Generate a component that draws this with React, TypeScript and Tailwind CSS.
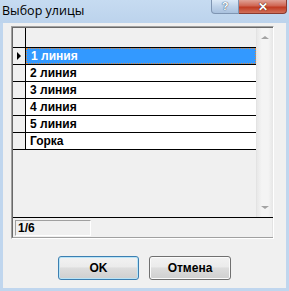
import { ReactNode } from 'react';

const rows = ['1 линия', '2 линия', '3 линия', '4 линия', '5 линия', 'Горка'];

function WinButton({ children, focused = false, className = '' }: { children: ReactNode; focused?: boolean; className?: string }) {
  return (
    <button
      className={`h-[24px] rounded-[3px] border text-[12px] font-bold text-black bg-[linear-gradient(#f2f2f2_0%,#ebebeb_45%,#dddddd_50%,#cfcfcf_100%)] ${
        focused ? 'border-[#3c7fb1] shadow-[inset_0_0_0_1px_#b9e4f7]' : 'border-[#707070] shadow-[inset_0_0_0_1px_#fbfbfb]'
      } ${className}`}
    >
      {children}
    </button>
  );
}

export default function App() {
  return (
    <div className="w-[289px] h-[291px] flex flex-col bg-[#c0d6ee] font-['Liberation_Sans',Arial,sans-serif] overflow-hidden">
      {/* Title bar */}
      <div className="h-[23px] flex items-start justify-between bg-[linear-gradient(#c6dbf1,#bcd3ec)]">
        <span className="pl-[2px] pt-[4px] text-[12.5px] leading-[14px] text-black font-['Open_Sans',sans-serif]">Выбор улицы</span>
        <div className="flex mr-[2px]">
          <div className="w-[28px] h-[14px] flex items-center justify-center rounded-bl-[4px] border border-t-0 border-[#7f95b2] bg-[linear-gradient(#dce9f7,#bed2e9_50%,#a9c1de)] text-[11px] font-bold leading-none text-white [text-shadow:0_0_1px_#35506f,0_0_1px_#35506f]">
            ?
          </div>
          <div className="w-[48px] h-[14px] flex items-center justify-center rounded-br-[4px] border border-t-0 border-l-0 border-[#8a3a2f] bg-[linear-gradient(#e0a296,#cf6552_45%,#c03b22_55%,#d0705a)] text-[12px] font-bold leading-none text-white [text-shadow:0_0_1px_#4d1a12,0_0_1px_#4d1a12]">
            ✕
          </div>
        </div>
      </div>

      {/* Client area */}
      <div className="flex-1 mx-[3px] mb-[3px] bg-[#f0f0f0] flex flex-col">
        {/* Grid panel */}
        <div className="mt-[3px] ml-[8px] w-[263px] h-[213px] border border-t-[#a0a0a0] border-l-[#a0a0a0] border-r-white border-b-white">
          <div className="h-full flex flex-col border-l border-t border-b border-[#696969] border-b-[#a0a0a0]">
            <div className="h-[190px] flex border-b border-black">
              <div className="flex-1 flex flex-col">
                <div className="h-[20px] flex border-b border-black shrink-0">
                  <div className="w-[13px] border-r border-black bg-[#f0f0f0]" />
                  <div className="flex-1 bg-[#f0f0f0]" />
                </div>
                {rows.map((r, i) => (
                  <div key={r} className="h-[17px] flex border-b border-black shrink-0">
                    <div className="w-[13px] border-r border-black bg-[#f0f0f0] flex items-center justify-center">
                      {i === 0 && <span className="w-0 h-0 border-y-[4px] border-y-transparent border-l-[4px] border-l-black" />}
                    </div>
                    {i === 0 ? (
                      <div className="flex-1 bg-[#3399ff] outline-1 outline-dotted outline-[#e08a3c] -outline-offset-1 flex items-center pl-[5px] text-white text-[12px] font-bold leading-none">
                        {r}
                      </div>
                    ) : (
                      <div className="flex-1 bg-white flex items-center pl-[4px] text-black text-[12px] font-bold leading-none">{r}</div>
                    )}
                  </div>
                ))}
                <div className="flex-1 bg-[#f0f0f0]" />
              </div>
              {/* Scrollbar */}
              <div className="w-[17px] flex flex-col items-center justify-between bg-[linear-gradient(90deg,#e8e8e8,#f4f4f4_30%,#f4f4f4_70%,#e6e6e6)] border-l border-[#e3e3e3] py-[8px]">
                <span className="w-0 h-0 border-x-[4px] border-x-transparent border-b-[3px] border-b-[#a3a3a3]" />
                <span className="w-0 h-0 border-x-[4px] border-x-transparent border-t-[3px] border-t-[#a3a3a3]" />
              </div>
            </div>
            {/* Status strip */}
            <div className="flex-1 flex items-start pt-[2px] pl-[2px] border-r border-[#e3e3e3]">
              <div className="w-[76px] h-[16px] border border-t-[#a0a0a0] border-l-[#a0a0a0] border-r-white border-b-white flex items-center pl-[2px] text-[12px] font-bold leading-none text-black">
                1/6
              </div>
            </div>
          </div>
        </div>

        {/* Buttons */}
        <div className="mt-[17px] flex justify-center gap-[10px]">
          <WinButton focused className="w-[81px]">OK</WinButton>
          <WinButton className="w-[82px]">Отмена</WinButton>
        </div>
      </div>
    </div>
  );
}
